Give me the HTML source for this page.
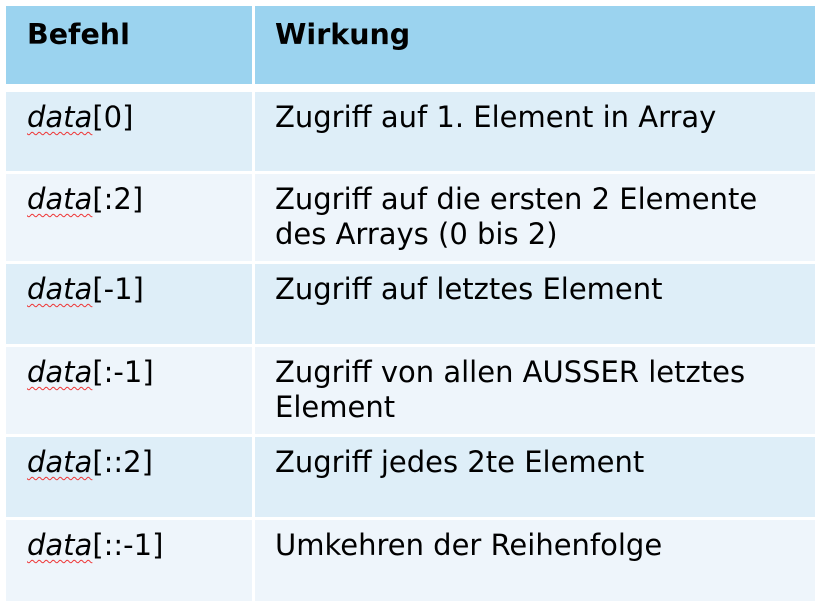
<!DOCTYPE html>
<html><head><meta charset="utf-8"><style>
body{margin:0;width:817px;height:601px;background:#fff;position:relative;overflow:hidden;font-family:"DejaVu Sans","Liberation Sans",sans-serif;font-size:29px;color:#000}
.c{position:absolute;box-sizing:border-box;line-height:35px;padding-top:8px}
.h{background:#9bd3ef;font-weight:bold;font-size:28.5px}
.a{background:#deeef8}
.b{background:#eef5fb}
.l{left:6px;width:246px;padding-left:21px}
.r{left:255px;width:560px;padding-left:20px}
i{text-decoration:underline wavy #e33;text-decoration-thickness:1px;text-underline-offset:4px}
</style></head><body>
<div class="c h l" style="top:6px;height:78px;padding-top:11px">Befehl</div>
<div class="c h r" style="top:6px;height:78px;padding-top:11px">Wirkung</div>

<div class="c a l" style="top:92px;height:79px"><i>data</i>[0]</div>
<div class="c a r" style="top:92px;height:79px">Zugriff auf 1. Element in Array</div>

<div class="c b l" style="top:174px;height:87px"><i>data</i>[:2]</div>
<div class="c b r" style="top:174px;height:87px">Zugriff auf die ersten 2 Elemente<br>des Arrays (0 bis 2)</div>

<div class="c a l" style="top:264px;height:80px"><i>data</i>[-1]</div>
<div class="c a r" style="top:264px;height:80px">Zugriff auf letztes Element</div>

<div class="c b l" style="top:347px;height:87px"><i>data</i>[:-1]</div>
<div class="c b r" style="top:347px;height:87px">Zugriff von allen AUSSER letztes<br>Element</div>

<div class="c a l" style="top:437px;height:80px"><i>data</i>[::2]</div>
<div class="c a r" style="top:437px;height:80px">Zugriff jedes 2te Element</div>

<div class="c b l" style="top:520px;height:81px"><i>data</i>[::-1]</div>
<div class="c b r" style="top:520px;height:81px">Umkehren der Reihenfolge</div>
</body></html>
